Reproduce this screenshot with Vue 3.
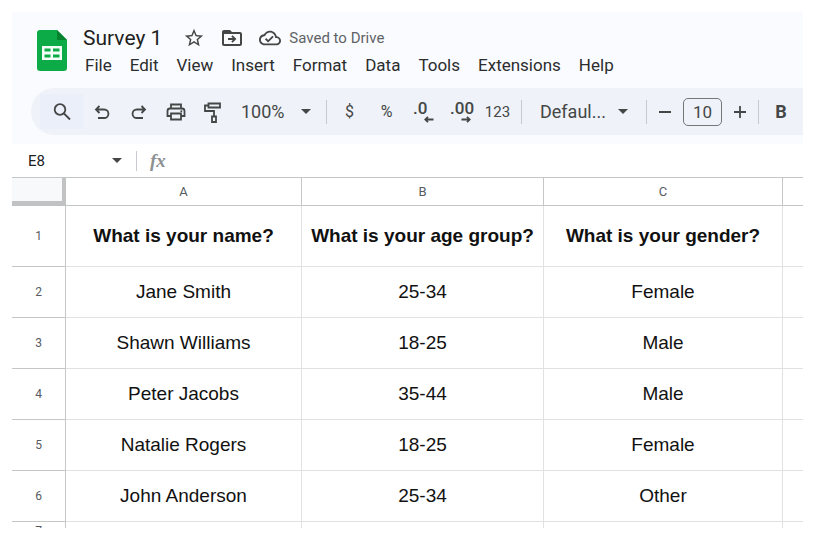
<script setup>
import { ref } from 'vue'

const menus = ['File', 'Edit', 'View', 'Insert', 'Format', 'Data', 'Tools', 'Extensions', 'Help']
const columns = ['A', 'B', 'C', '']
const rows = [
  ['What is your name?', 'What is your age group?', 'What is your gender?', ''],
  ['Jane Smith', '25-34', 'Female', ''],
  ['Shawn Williams', '18-25', 'Male', ''],
  ['Peter Jacobs', '35-44', 'Male', ''],
  ['Natalie Rogers', '18-25', 'Female', ''],
  ['John Anderson', '25-34', 'Other', ''],
  ['', '', '', ''],
]
const cellName = ref('E8')
const formula = ref('')
const fontSize = ref('10')
</script>

<template>
  <div class="page">
    <div class="sheet">
      <header class="top">
        <div class="brand">
          <svg class="logo" viewBox="0 0 30 41" aria-hidden="true">
            <path d="M3 0h17l10 10v28a3 3 0 0 1-3 3H3a3 3 0 0 1-3-3V3a3 3 0 0 1 3-3z" fill="#0cab47" />
            <path d="M20 0l10 10H20z" fill="#07822f" />
            <path fill-rule="evenodd" d="M5 16h20v14H5zM7.500 18.500v3h6v-3zM16 18.500v3h6.500v-3zM7.500 24.500v3h6v-3zM16 24.500v3h6.500v-3z" fill="#f4fff7" />
          </svg>
          <div class="heading">
            <div class="title-row">
              <h1>Survey 1</h1>
              <button class="plain" aria-label="Star">
                <svg class="i22" viewBox="0 0 24 24"><path d="M22 9.240l-7.190-.62L12 2 9.190 8.630 2 9.240l5.460 4.730L5.820 21 12 17.270 18.180 21l-1.630-7.030L22 9.240zM12 15.400l-3.760 2.270 1-4.280-3.320-2.880 4.380-.38L12 6.100l1.710 4.040 4.380.38-3.320 2.880 1 4.280L12 15.400z" /></svg>
              </button>
              <button class="plain" aria-label="Move">
                <svg class="i24" viewBox="0 0 24 24">
                  <path d="M20 6h-8l-2-2H4c-1.100 0-2 .9-2 2v12c0 1.100.9 2 2 2h16c1.100 0 2-.9 2-2V8c0-1.100-.9-2-2-2zm0 12H4V8h16v10z" />
                  <path d="M12.600 9.200l-1.300 1.300 1.500 1.600H8v1.800h4.800l-1.500 1.600 1.300 1.300L16.400 13z" />
                </svg>
              </button>
              <button class="plain" aria-label="Document status">
                <svg class="i22" viewBox="0 0 24 24"><path d="M19.350 10.040C18.670 6.590 15.640 4 12 4 9.110 4 6.600 5.640 5.350 8.040 2.340 8.360 0 10.910 0 14c0 3.310 2.690 6 6 6h13c2.760 0 5-2.240 5-5 0-2.640-2.050-4.780-4.650-4.960zM19 18H6c-2.210 0-4-1.790-4-4 0-2.050 1.530-3.760 3.560-3.970l1.070-.11.5-.95C8.080 7.140 9.940 6 12 6c2.620 0 4.880 1.860 5.390 4.430l.3 1.500 1.530.11c1.560.1 2.780 1.410 2.780 2.960 0 1.650-1.350 3-3 3zm-9-3.820l-2.090-2.090L6.500 13.500 10 17l6.010-6.010-1.410-1.410z" /></svg>
              </button>
              <span class="saved">Saved to Drive</span>
            </div>
            <nav class="menus">
              <button v-for="m in menus" :key="m" class="plain">{{ m }}</button>
            </nav>
          </div>
        </div>

        <div class="toolbar" role="toolbar" aria-label="Main">
          <button class="tool search" aria-label="Search the menus">
            <svg class="i20" viewBox="0 0 20 20"><g class="line"><circle cx="8" cy="7.500" r="5.300" /><path d="M12 11.500l6 6" /></g></svg>
          </button>
          <button class="tool" aria-label="Undo">
            <svg class="i20" viewBox="0 0 20 20"><path class="line" d="M7.500 4L4 7.500 7.500 11M4.500 7.500h7.700a3.800 3.800 0 0 1 0 8.500H6" /></svg>
          </button>
          <button class="tool" aria-label="Redo">
            <svg class="i20" viewBox="0 0 20 20"><path class="line" d="M12.500 4L16 7.500 12.500 11M15.500 7.500H7.800a3.800 3.800 0 0 0 0 8.500H14" /></svg>
          </button>
          <button class="tool" aria-label="Print">
            <svg class="i20" viewBox="0 0 20 20"><g class="line"><path d="M5 6V2.500h10V6M5 14H1.500V9a2.500 2.500 0 0 1 2.500-2.500h12A2.500 2.500 0 0 1 18.500 9v5H15" /><path d="M5 11.500h10v6H5z" /></g><circle cx="15.300" cy="9.300" r="1" /></svg>
          </button>
          <button class="tool" aria-label="Paint format">
            <svg class="i22" viewBox="0 0 22 22"><g class="line"><path d="M6.500 2.500h11.500v4H6.500zM6.500 4.500H3v5.500h9V15" /><path d="M10 15.500h4v5.500h-4z" /></g></svg>
          </button>
          <label class="drop zoom">
            <select aria-label="Zoom"><option>100%</option></select>
            <svg class="caret" viewBox="0 0 10 5"><path d="M0 0h10L5 5z" /></svg>
          </label>
          <i class="rule"></i>
          <div class="formats">
            <button class="tool" aria-label="Format as currency">$</button>
            <button class="tool" aria-label="Format as percent">%</button>
            <button class="tool decimal" aria-label="Decrease decimal places">
              <span>.0</span>
              <svg viewBox="0 0 10 7"><path class="line" d="M9.500 3.500H1.500M4 .8L1.300 3.500 4 6.200" /></svg>
            </button>
            <button class="tool decimal" aria-label="Increase decimal places">
              <span>.00</span>
              <svg viewBox="0 0 10 7"><path class="line" d="M.5 3.500h8M6 .8l2.700 2.700L6 6.200" /></svg>
            </button>
            <button class="tool number" aria-label="More formats">123</button>
          </div>
          <i class="rule"></i>
          <label class="drop font">
            <select aria-label="Font"><option>Defaul...</option></select>
            <svg class="caret" viewBox="0 0 10 5"><path d="M0 0h10L5 5z" /></svg>
          </label>
          <i class="rule"></i>
          <div class="stepper">
            <button class="tool step" aria-label="Decrease font size">
              <svg class="i14" viewBox="0 0 14 14"><path class="line" d="M1 7h12" /></svg>
            </button>
            <input v-model="fontSize" class="size" aria-label="Font size" />
            <button class="tool step" aria-label="Increase font size">
              <svg class="i14" viewBox="0 0 14 14"><path class="line" d="M1 7h12M7 1v12" /></svg>
            </button>
          </div>
          <i class="rule"></i>
          <button class="tool bold" aria-label="Bold">B</button>
        </div>
      </header>

      <div class="formula-bar">
        <input v-model="cellName" class="name-box" aria-label="Name box" />
        <button class="plain" aria-label="Named ranges">
          <svg class="caret" viewBox="0 0 10 5"><path d="M0 0h10L5 5z" /></svg>
        </button>
        <i class="rule"></i>
        <span class="fx">fx</span>
        <input v-model="formula" class="formula" aria-label="Formula" />
      </div>

      <table>
        <colgroup>
          <col class="c-num" /><col class="c-a" /><col class="c-b" /><col class="c-c" /><col />
        </colgroup>
        <thead>
          <tr>
            <td class="corner"></td>
            <th v-for="(c, i) in columns" :key="i" scope="col">{{ c }}</th>
          </tr>
        </thead>
        <tbody>
          <tr v-for="(row, r) in rows" :key="r" :class="{ question: r === 0, short: r === 6 }">
            <th scope="row">{{ r + 1 }}</th>
            <td v-for="(cell, c) in row" :key="c">{{ cell }}</td>
          </tr>
        </tbody>
      </table>
    </div>
  </div>
</template>

<style>
body {
  background: #fff;
}
</style>

<style scoped>
.page {
  box-sizing: border-box;
  height: 100vh;
  padding: 12px;
  font-family: Roboto, "Liberation Sans", sans-serif;
  color: #3c4043;
}
.sheet {
  height: 100%;
  overflow: hidden;
}
button,
input,
select {
  margin: 0;
  padding: 0;
  border: 0;
  background: none;
  font: inherit;
  color: inherit;
  outline: none;
}
svg {
  display: block;
  flex: none;
  fill: #444746;
}
.line {
  fill: none;
  stroke: #444746;
  stroke-width: 1.8;
}
.i14 { width: 14px; height: 14px; }
.i20 { width: 20px; height: 20px; }
.i22 { width: 22px; height: 22px; }
.i24 { width: 24px; height: 24px; }
.caret { width: 10px; height: 5px; }

.top {
  background: #fafbfe;
  padding-bottom: 9px;
}
.brand {
  display: flex;
  gap: 16px;
  padding: 12px 0 10px 25px;
}
.logo {
  width: 30px;
  height: 41px;
  margin-top: 6px;
}
.title-row {
  display: flex;
  align-items: center;
  height: 28px;
  gap: 15px;
}
h1 {
  margin: 0 6px 0 0;
  font-size: 21px;
  font-weight: 400;
  line-height: 28px;
  color: #1f1f1f;
}
.saved {
  margin-left: -7px;
  font-size: 15px;
  color: #5f6368;
}
.menus {
  display: flex;
  gap: 18px;
  height: 26px;
  padding-left: 2px;
  font-size: 17px;
  color: #2b2d2e;
}

.toolbar {
  display: flex;
  align-items: center;
  height: 47px;
  margin-left: 19px;
  padding-left: 9px;
  border-radius: 24px 0 0 24px;
  background: #eff2f8;
  color: #444746;
  overflow: hidden;
}
.tool {
  display: flex;
  flex: none;
  align-items: center;
  justify-content: center;
  width: 37px;
  height: 35px;
  font-size: 16px;
}
.search {
  width: 43px;
  background: #ebeffa;
}
.rule {
  flex: none;
  width: 1px;
  height: 24px;
  background: #c7cace;
}
.drop {
  display: flex;
  flex: none;
  align-items: center;
  font-size: 18px;
}
.drop select {
  appearance: none;
  flex: 1;
  min-width: 0;
}
.zoom {
  width: 70px;
  padding: 0 15px 0 10px;
}
.font {
  width: 88px;
  padding: 0 18px;
}
.formats {
  display: flex;
  padding: 0 5px 0 4px;
}
.number {
  font-size: 15px;
}
.decimal {
  flex-direction: column;
  align-items: flex-start;
  padding-left: 8px;
  font-size: 17px;
  font-weight: 500;
  line-height: 15px;
}
.decimal svg {
  width: 10px;
  height: 7px;
  margin-left: 11px;
}
.stepper {
  display: flex;
  align-items: center;
}
.step {
  width: 36px;
}
.size {
  box-sizing: border-box;
  width: 39px;
  height: 28px;
  border: 1px solid #747775;
  border-radius: 5px;
  font-size: 17px;
  text-align: center;
}
.bold {
  width: 44px;
  font-size: 18px;
  font-weight: 700;
}

.formula-bar {
  display: flex;
  align-items: center;
  height: 33px;
  padding-left: 16px;
}
.name-box {
  width: 84px;
  font-size: 15px;
  color: #202124;
}
.formula-bar .rule {
  height: 20px;
  margin: 0 13px 0 14px;
}
.fx {
  font: italic 700 19px "Liberation Serif", serif;
  color: #8d9093;
}
.formula {
  flex: 1;
  min-width: 0;
  margin-left: 12px;
}

table {
  width: 100%;
  table-layout: fixed;
  border-collapse: separate;
  border-spacing: 0;
  border-top: 1px solid #c4c7c5;
  font-family: "Liberation Sans", Arial, sans-serif;
}
.c-num { width: 54px; }
.c-a { width: 236px; }
.c-b { width: 242px; }
.c-c { width: 239px; }
th,
td {
  box-sizing: border-box;
  height: 51px;
  padding: 0;
  text-align: center;
  vertical-align: middle;
  border-right: 1px solid #e1e1e1;
  border-bottom: 1px solid #e1e1e1;
}
th {
  font-family: Roboto, "Liberation Sans", sans-serif;
  font-size: 13px;
  font-weight: 400;
  color: #575b5f;
  border-color: #c4c7c5;
}
tbody th {
  font-size: 12px;
}
thead th,
.corner {
  height: 28px;
}
.corner {
  border-right: 4px solid #c0c2c3;
  border-bottom: 5px solid #c0c2c3;
  background: #f8f9fa;
}
td {
  font-size: 19px;
  color: #111;
}
.question th,
.question td {
  height: 61px;
}
.question td {
  font-weight: 700;
}
.short th,
.short td {
  height: 18px;
}
th:last-child,
td:last-child {
  border-right: 0;
}
</style>
